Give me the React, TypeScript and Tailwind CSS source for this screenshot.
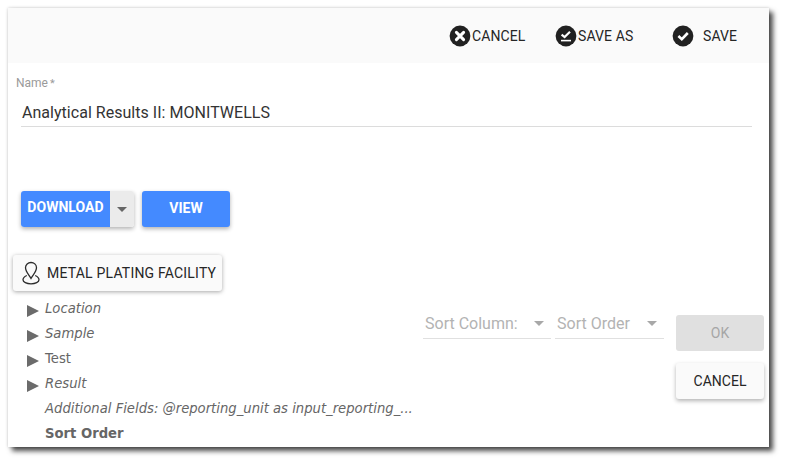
import type { ReactNode } from 'react'

const roboto = "font-['Roboto',sans-serif]"

function CircleIcon({ children }: { children: ReactNode }) {
  return (
    <svg width="22" height="22" viewBox="0 0 22 22" className="shrink-0">
      <circle cx="11" cy="11" r="10.4" fill="#212121" />
      {children}
    </svg>
  )
}

function HeaderAction({ icon, label, className }: { icon: ReactNode; label: string; className: string }) {
  return (
    <div className={`flex items-center ${className}`}>
      {icon}
      <span className="text-[14px] leading-5 tracking-[0.1px] text-[#262626]">{label}</span>
    </div>
  )
}

function TreeRow({ label, italic, arrow = true }: { label: string; italic?: boolean; arrow?: boolean }) {
  return (
    <div className="flex h-[25px] items-center">
      <div className="w-[29px] shrink-0 pl-[11px] pt-[5px]">
        {arrow && (
          <svg width="12" height="12" viewBox="0 0 12 12" className="block">
            <path d="M0 0 L12 6 L0 12 Z" fill="#6b6b6b" />
          </svg>
        )}
      </div>
      <span className={`whitespace-nowrap font-['DejaVu_Sans',sans-serif] text-[13.2px] text-[#666] ${italic ? 'italic' : ''}`}>
        {label}
      </span>
    </div>
  )
}

function SortSelect({ label, className }: { label: string; className: string }) {
  return (
    <div className={`flex h-[32px] items-center justify-between border-b border-[#e0e0e0] pl-[2px] pr-[7px] pt-[2px] ${className}`}>
      <span className="text-[16px] leading-5 text-[#b3b3b3]">{label}</span>
      <svg width="10" height="5" viewBox="0 0 10 5">
        <path d="M0 0 L10 0 L5 5 Z" fill="#a8a8a8" />
      </svg>
    </div>
  )
}

export default function App() {
  return (
    <div className={`h-[464px] w-[785px] overflow-hidden bg-white pl-2 pt-2 ${roboto}`}>
      <div className="h-[439px] w-[761px] bg-white shadow-[4px_4px_5px_rgba(0,0,0,0.7),0_0_3px_rgba(0,0,0,0.2)]">
        <div className="flex h-[55px] items-center bg-[#fafafa] pl-[441px]">
          <HeaderAction
            className="w-[106px] gap-px"
            label="CANCEL"
            icon={
              <CircleIcon>
                <path d="M7.4 7.4 L14.6 14.6 M14.6 7.4 L7.4 14.6" stroke="#fff" strokeWidth="3" strokeLinecap="round" />
              </CircleIcon>
            }
          />
          <HeaderAction
            className="w-[117px] gap-px"
            label="SAVE AS"
            icon={
              <CircleIcon>
                <path d="M6.6 9.6 L9.6 12 L15 6.8" fill="none" stroke="#fff" strokeWidth="2.2" />
                <path d="M6 15.6 H16" stroke="#fff" strokeWidth="1.6" />
              </CircleIcon>
            }
          />
          <HeaderAction
            className="gap-[9px]"
            label="SAVE"
            icon={
              <CircleIcon>
                <path d="M6.4 11 L9.8 14.2 L15.8 8" fill="none" stroke="#fff" strokeWidth="2.6" />
              </CircleIcon>
            }
          />
        </div>

        <div className="pl-2 pt-[13px]">
          <div className="text-[12px] leading-[14px] text-[#9a9a9a]">Name<span className="ml-[2px] text-[11px]">*</span></div>
          <div className="ml-[5px] mt-[11px] h-[25px] w-[731px] border-b border-[#dcdcdc] pl-px text-[16px] leading-[22px] tracking-[0.03px] text-[#333]">
            Analytical Results II: MONITWELLS
          </div>

          <div className="ml-[5px] mt-[64px] flex gap-2">
            <div className="flex h-9 w-[113px] overflow-hidden rounded-[3px] shadow-[0_2px_4px_rgba(0,0,0,0.3)]">
              <div className="flex w-[89px] items-center justify-center bg-[#448aff] pb-[4px] text-[14px] font-bold tracking-[0.03px] text-white">
                DOWNLOAD
              </div>
              <div className="flex flex-1 items-center justify-center bg-[#ebebeb]">
                <svg width="10" height="5" viewBox="0 0 10 5">
                  <path d="M0 0 L10 0 L5 5 Z" fill="#666" />
                </svg>
              </div>
            </div>
            <div className="flex h-9 w-[88px] items-center justify-center rounded-[3px] bg-[#448aff] pb-px text-[14px] font-bold text-white shadow-[0_2px_4px_rgba(0,0,0,0.3)]">
              VIEW
            </div>
          </div>

          <div className="-ml-[3px] mt-[28px] flex h-9 w-[209px] items-center rounded-[3px] bg-[#fafafa] pl-[9px] text-[14px] tracking-[0.2px] text-[#262626] shadow-[0_1px_4px_rgba(0,0,0,0.35)]">
            <svg width="18" height="24" viewBox="0 0 18 24" fill="none" stroke="#2b2b2b" strokeWidth="1.3" className="mr-[7px] shrink-0">
              <path d="M9 17.5 C7 14 3.5 10.5 3.5 6.8 C3.5 3.5 6 1.5 9 1.5 C12 1.5 14.5 3.5 14.5 6.8 C14.5 10.5 11 14 9 17.5 Z" />
              <path d="M4.8 14.5 C2.5 15.5 1 17 1 18.8 C1 21 4.5 22.8 9 22.8 C13.5 22.8 17 21 17 18.8 C17 17 15.5 15.5 13.2 14.5" />
            </svg>
            METAL PLATING FACILITY
          </div>

          <div className="flex">
            <div className="w-[407px] pt-[5px]">
              <TreeRow label="Location" italic />
              <TreeRow label="Sample" italic />
              <TreeRow label="Test" />
              <TreeRow label="Result" italic />
              <TreeRow label="Additional Fields: @reporting_unit as input_reporting_..." italic arrow={false} />
              <div className="flex h-[25px] items-center pl-[29px] font-['DejaVu_Sans',sans-serif] text-[13.2px] font-bold text-[#666]">
                Sort Order
              </div>
            </div>
            <div className="flex pt-[16px]">
              <SortSelect label="Sort Column:" className="w-[128px]" />
              <SortSelect label="Sort Order" className="ml-[4px] w-[109px]" />
              <div className="ml-[12px] flex w-[88px] flex-col gap-3 pt-[8px]">
                <div className="flex h-9 items-center justify-center rounded-[3px] bg-[#e0e0e0] text-[14px] text-[#a6a6a6]">OK</div>
                <div className="flex h-9 items-center justify-center rounded-[3px] bg-[#fafafa] text-[14px] text-[#262626] shadow-[0_2px_4px_rgba(0,0,0,0.3)]">
                  CANCEL
                </div>
              </div>
            </div>
          </div>
        </div>
      </div>
    </div>
  )
}
